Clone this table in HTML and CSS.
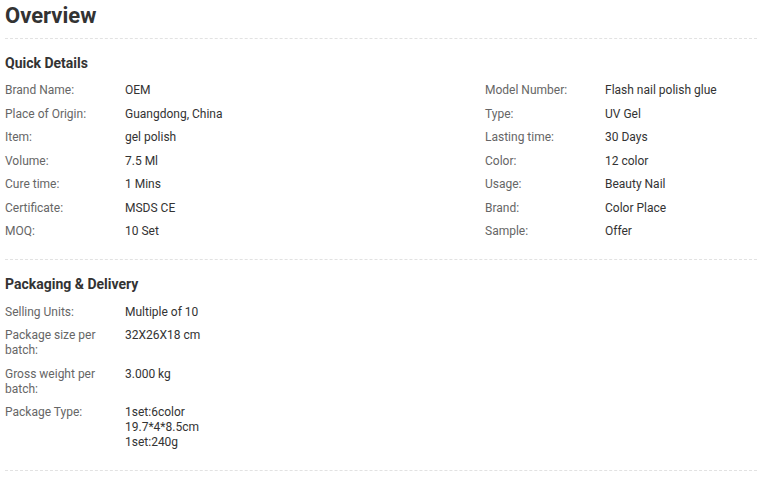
FILE: index.html
```html
<!DOCTYPE html>
<html lang="en">
<head>
<meta charset="utf-8">
<title>Overview</title>
<link rel="stylesheet" href="styles.css">
</head>
<body>
<div class="page">
  <h1 class="title">Overview</h1>

  <section class="section section-quick">
    <h2 class="section-title">Quick Details</h2>
    <div class="grid grid-quad">
      <div class="label">Brand Name:</div><div class="value">OEM</div>
      <div class="label">Model Number:</div><div class="value">Flash nail polish glue</div>
      <div class="label">Place of Origin:</div><div class="value">Guangdong, China</div>
      <div class="label">Type:</div><div class="value">UV Gel</div>
      <div class="label">Item:</div><div class="value">gel polish</div>
      <div class="label">Lasting time:</div><div class="value">30 Days</div>
      <div class="label">Volume:</div><div class="value">7.5 Ml</div>
      <div class="label">Color:</div><div class="value">12 color</div>
      <div class="label">Cure time:</div><div class="value">1 Mins</div>
      <div class="label">Usage:</div><div class="value">Beauty Nail</div>
      <div class="label">Certificate:</div><div class="value">MSDS CE</div>
      <div class="label">Brand:</div><div class="value">Color Place</div>
      <div class="label">MOQ:</div><div class="value">10 Set</div>
      <div class="label">Sample:</div><div class="value">Offer</div>
    </div>
  </section>

  <section class="section section-packaging">
    <h2 class="section-title">Packaging &amp; Delivery</h2>
    <div class="grid grid-pair">
      <div class="label">Selling Units:</div><div class="value">Multiple of 10</div>
      <div class="label">Package size per batch:</div><div class="value">32X26X18 cm</div>
      <div class="label">Gross weight per batch:</div><div class="value">3.000 kg</div>
      <div class="label">Package Type:</div><div class="value">1set:6color<br>19.7*4*8.5cm<br>1set:240g</div>
    </div>
  </section>
</div>
</body>
</html>
```

FILE: styles.css
```css
html, body {
  margin: 0;
  padding: 0;
  background: #ffffff;
}

body {
  font-family: Roboto, "Liberation Sans", Arial, sans-serif;
  color: #333333;
}

.page {
  padding: 1px 1px 0 5px;
}

.title {
  margin: 0;
  font-size: 22px;
  font-weight: 700;
  line-height: 30px;
  color: #333333;
  padding-bottom: 7px;
  border-bottom: 1px dashed #e2e2e2;
}

.section {
  padding-top: 14px;
  border-bottom: 1px dashed #e2e2e2;
}

.section-quick {
  padding-bottom: 20px;
}

.section-packaging {
  padding-bottom: 20px;
}

.section-title {
  margin: 0 0 10.4px;
  font-size: 14px;
  font-weight: 700;
  line-height: 20px;
  color: #333333;
}

.grid {
  display: grid;
  row-gap: 8.5px;
  font-size: 12px;
  line-height: 15px;
}

.grid-quad {
  grid-template-columns: 120px 360px 120px 1fr;
}

.grid-pair {
  grid-template-columns: 120px 1fr;
}

.label {
  color: #666666;
  padding-right: 18px;
}

.value {
  color: #333333;
}
```
